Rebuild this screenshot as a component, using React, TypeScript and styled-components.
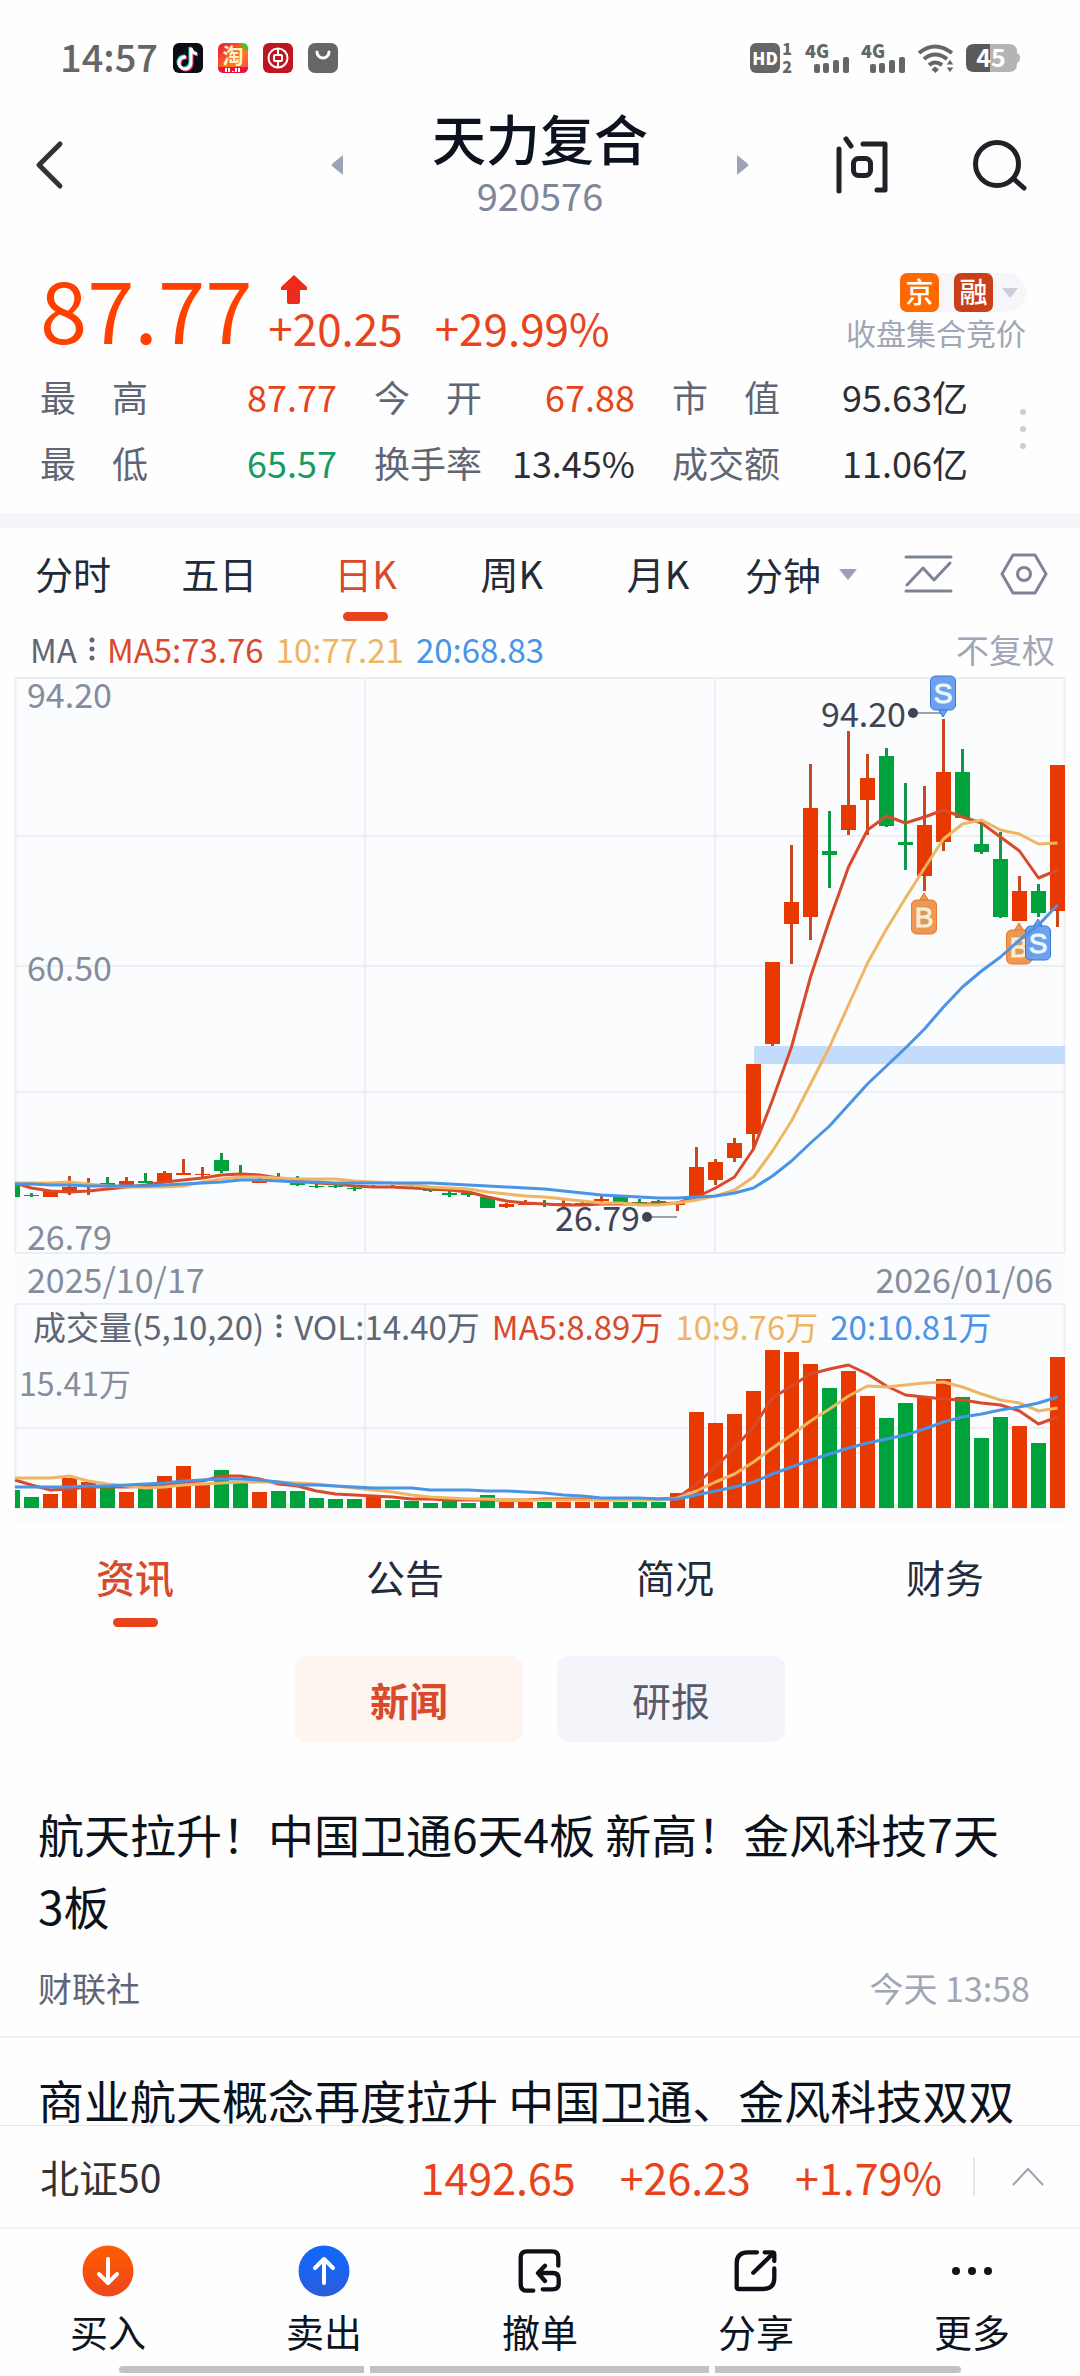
import React, { useState } from "react";
import styled, { createGlobalStyle } from "styled-components";

const RED = "#e8431a";
const INK = "#222b3a";
const SLATE = "#5f6675";
const MUTED = "#a0a6b6";
const MA_RED = "#d84a2b";
const MA_GOLD = "#eeb663";
const MA_BLUE = "#4a94e6";
const UP = "#e83a00";
const DOWN = "#00a33b";

const GlobalStyle = createGlobalStyle`
  * { box-sizing: border-box; }
  body {
    margin: 0;
    background: #fefefe;
    font-family: "Noto Sans CJK SC", "Noto Sans", sans-serif;
    color: ${INK};
  }
  button { font: inherit; color: inherit; background: none; border: 0; padding: 0; cursor: pointer; }
  h1, h2, p, dl, dd, dt { margin: 0; font-weight: 400; }
  svg { display: block; overflow: visible; }
`;

const Screen = styled.div`
  height: 100vh;
  display: flex;
  flex-direction: column;
  overflow: hidden;
`;

/* ---------- status bar ---------- */

const StatusBar = styled.div`
  display: flex;
  align-items: center;
  justify-content: space-between;
  height: 96px;
  padding: 20px 60px 0 60px;
  flex: none;
`;
const StatusGroup = styled.div<{ $gap: number }>`
  display: flex;
  align-items: center;
  gap: ${(p) => p.$gap}px;
`;
const Clock = styled.span`
  font-size: 38px;
  line-height: 40px;
  font-weight: 500;
  color: #666;
  padding-bottom: 5px;
`;

const HdIcon = () => (
  <svg width="43" height="30" viewBox="0 0 43 30" fontFamily="Noto Sans CJK SC, sans-serif" fontWeight="900" fill="#666">
    <rect width="30" height="30" rx="6" />
    <text x="15" y="22" fontSize="17" textAnchor="middle" fill="#fff">HD</text>
    <text x="37" y="12" fontSize="16" textAnchor="middle">1</text>
    <text x="37" y="30" fontSize="16" textAnchor="middle">2</text>
  </svg>
);
const SignalIcon = () => (
  <svg width="44" height="30" viewBox="0 0 44 30" fill="#666">
    <text x="0" y="15" fontSize="18" fontWeight="900" fontFamily="Noto Sans CJK SC, sans-serif">4G</text>
    <rect x="9" y="21" width="6" height="9" rx="2" />
    <rect x="18" y="20" width="6" height="10" rx="2" />
    <rect x="28" y="17" width="6" height="13" rx="2" />
    <rect x="38" y="14" width="6" height="16" rx="2" />
  </svg>
);
const WifiIcon = () => (
  <svg width="37" height="30" viewBox="0 0 37 30" fill="none" stroke="#666" strokeWidth="4">
    <path d="M2 10 Q18 -3 35 10" />
    <path d="M7 16 Q18 7 30 16" />
    <path d="M12 22 Q18 17 25 22" />
    <path d="M18 23.500 L22 26.500 L18.500 30 L14.500 26.500Z" fill="#666" stroke="none" />
    <path d="M33 16 l4 6 h-8z M33 30 l4-6 h-8z" fill="#666" stroke="#fff" strokeWidth="1" />
  </svg>
);
const BatteryIcon = () => (
  <svg width="54" height="28" viewBox="0 0 54 28">
    <path d="M8 0 H24 V28 H8 Q0 28 0 20 V8 Q0 0 8 0Z" fill="#5a5a5a" />
    <path d="M24 0 H43 Q51 0 51 8 V9 Q54 10 54 14 Q54 18 51 19 V20 Q51 28 43 28 H24Z" fill="#b4b4b4" />
    <text x="25" y="23" fontSize="25" fontWeight="700" textAnchor="middle" fill="#fff" fontFamily="Noto Sans CJK SC, sans-serif">45</text>
  </svg>
);
const VideoAppIcon = () => (
  <svg width="30" height="30" viewBox="0 0 30 30" fill="none" strokeWidth="3">
    <rect width="30" height="30" rx="6" fill="#0c0d14" />
    <path d="M13 14 a6 6 0 1 0 5 6 V5 q1 5 6 6" stroke="#25e5e0" transform="translate(-1 -1)" />
    <path d="M13 14 a6 6 0 1 0 5 6 V5 q1 5 6 6" stroke="#f1385c" transform="translate(1 1)" />
    <path d="M13 14 a6 6 0 1 0 5 6 V5 q1 5 6 6" stroke="#fff" />
  </svg>
);
const ShopAppIcon = () => (
  <svg width="30" height="30" viewBox="0 0 30 30">
    <defs>
      <linearGradient id="shop" x1="0" y1="0" x2="1" y2="1">
        <stop offset="0" stopColor="#e3183b" />
        <stop offset="0.6" stopColor="#ff7a1c" />
        <stop offset="1" stopColor="#ff3b6b" />
      </linearGradient>
    </defs>
    <rect width="30" height="30" rx="6" fill="url(#shop)" />
    <path d="M22 0 H25 Q30 0 30 6 V8 Q25 6 22 0Z" fill="#4fc32c" />
    <path d="M0 24 H30 Q30 30 24 30 H6 Q0 30 0 24Z" fill="#e8113f" />
    <text x="15" y="20" fontSize="21" fontWeight="700" textAnchor="middle" fill="#fff3c8" fontFamily="Noto Sans CJK SC, sans-serif">淘</text>
    <path d="M8 25 v4 M11 25 v4 M15 28 v1 M18 25 v4 M21 25 v4" stroke="#fff" strokeWidth="2" />
  </svg>
);
const BankAppIcon = () => (
  <svg width="30" height="30" viewBox="0 0 30 30" fill="none" stroke="#fff">
    <rect width="30" height="30" rx="6" fill="#bf1521" stroke="none" />
    <circle cx="15" cy="15" r="9.500" strokeWidth="2" />
    <rect x="11" y="12" width="8" height="6" rx="1" strokeWidth="2" />
    <path d="M15 5 V12 M15 18 V25" strokeWidth="2" />
  </svg>
);
const BagAppIcon = () => (
  <svg width="30" height="30" viewBox="0 0 30 30">
    <rect width="30" height="30" rx="7" fill="#666" />
    <path d="M9 9 a6 6 0 0 0 12 0" fill="none" stroke="#fff" strokeWidth="3" strokeLinecap="round" />
  </svg>
);

/* ---------- header ---------- */

const Header = styled.header`
  display: grid;
  grid-template-columns: 1fr 418px 1fr;
  align-items: center;
  height: 138px;
  flex: none;
  padding: 0 34px;
`;
const BackButton = styled.button`
  justify-self: start;
`;
const Switcher = styled.div`
  display: flex;
  align-items: center;
  justify-content: space-between;
`;
const Security = styled.div`
  text-align: center;
  padding-bottom: 4px;
`;
const SecurityName = styled.h1`
  font-size: 54px;
  line-height: 64px;
  font-weight: 500;
  color: #0c131f;
`;
const SecurityCode = styled.p`
  font-size: 38px;
  line-height: 50px;
  color: #7e869a;
`;
const HeaderActions = styled.div`
  display: flex;
  justify-content: flex-end;
  align-items: center;
  gap: 82px;
  padding-right: 18px;
`;

/* ---------- quote ---------- */

const Quote = styled.section`
  flex: none;
  padding: 0 54px 18px 40px;
`;
const PriceRow = styled.div`
  display: flex;
  height: 129px;
`;
const Price = styled.p`
  font-size: 85px;
  line-height: 146px;
  color: #ff4000;
`;
const Change = styled.div`
  display: flex;
  flex-direction: column;
  padding: 40px 0 0 16px;
`;
const RiseArrow = styled.svg`
  margin: 1px 0 0 12px;
`;
const ChangeValues = styled.div`
  display: flex;
  gap: 32px;
  font-size: 44px;
  line-height: 50px;
  margin-top: -3px;
  color: ${RED};
`;
const Session = styled.div`
  margin-left: auto;
  padding-top: 39px;
  text-align: right;
`;
const Tags = styled.button`
  display: inline-flex;
  align-items: center;
  gap: 9px;
  height: 39px;
  padding-right: 8px;
  background: #f6f6fa;
  border-radius: 8px 20px 20px 8px;
  vertical-align: top;
`;
const TagPair = styled.span`
  display: flex;
  gap: 15px;
`;
const Tag = styled.span<{ $color: string }>`
  width: 39px;
  height: 39px;
  border-radius: 7px;
  background: ${(p) => p.$color};
  color: #fff;
  font-size: 28px;
  line-height: 37px;
  font-weight: 500;
  text-align: center;
`;
const SessionNote = styled.p`
  font-size: 30px;
  line-height: 40px;
  color: ${MUTED};
`;
const StatsWrap = styled.div`
  display: flex;
  justify-content: space-between;
  align-items: center;
`;
const Stats = styled.dl`
  display: grid;
  grid-template-columns: 297fr 261fr 296fr;
  column-gap: 37px;
  flex: 1;
  margin-right: 52px;
`;
const Stat = styled.div`
  display: flex;
  justify-content: space-between;
  font-size: 36px;
  line-height: 66px;
  white-space: nowrap;
`;
const StatName = styled.dt`
  color: ${SLATE};
`;
const StatValue = styled.dd<{ $color: string }>`
  color: ${(p) => p.$color};
`;
const Band = styled.div`
  flex: none;
  height: 15px;
  background: #f4f5fa;
`;

/* ---------- chart ---------- */

const Periods = styled.nav`
  flex: none;
  display: grid;
  grid-template-columns: 731fr 317fr;
  height: 98px;
  padding-right: 32px;
  align-items: start;
`;
const Underlined = styled.button<{ $active: boolean; $top: number; $lh: number; $weight: number }>`
  flex: 1;
  display: flex;
  flex-direction: column;
  align-items: center;
  padding-top: ${(p) => p.$top}px;
  line-height: ${(p) => p.$lh}px;
  font-weight: ${(p) => p.$weight};
  white-space: nowrap;
  color: ${(p) => (p.$active ? MA_RED : INK)};
  &::after {
    content: "";
    width: 45px;
    height: 9px;
    border-radius: 5px;
    background: ${(p) => (p.$active ? RED : "transparent")};
  }
`;
const PeriodTabs = styled.div`
  display: flex;
  font-size: 38px;
`;
const PeriodTools = styled.div`
  display: flex;
  justify-content: space-between;
  padding-left: 14px;
  font-size: 38px;
`;
const ToolButton = styled.button`
  display: flex;
  align-items: center;
  gap: 18px;
  height: 92px;
  line-height: 84px;
  white-space: nowrap;
`;
const Legend = styled.div<{ $pad: string }>`
  flex: none;
  display: flex;
  align-items: center;
  gap: 12px;
  height: 51px;
  padding: ${(p) => p.$pad};
  font-size: 33px;
  line-height: 44px;
  white-space: nowrap;
`;
const LegendItem = styled.span<{ $color: string }>`
  color: ${(p) => p.$color};
`;
const Adjust = styled.button`
  margin-left: auto;
  color: ${MUTED};
`;
const ChartPanel = styled.section`
  flex: none;
  margin: 0 15px;
  background: #fbfcfe;
`;
const Stack = styled.div`
  display: grid;
  & > * { grid-area: 1 / 1; }
`;
const ChartSvg = styled.svg`
  width: 100%;
  height: auto;
  font-family: "Noto Sans CJK SC", sans-serif;
`;
const DateRow = styled.div`
  display: flex;
  justify-content: space-between;
  padding: 1px 12px 0;
  font-size: 34px;
  line-height: 48px;
  color: #858c9c;
  border-bottom: 2px solid #eceef2;
`;

type Candle = [up: 0 | 1, high: number, top: number, bottom: number, low: number];

/* Newest session first. */
const candles: Candle[] = [
  [1, 765, 765, 911, 927], [0, 884, 891, 913, 917], [1, 876, 891, 921, 921], [0, 832, 859, 917, 918],
  [0, 823, 844, 852, 854], [0, 749, 772, 818, 818], [1, 719, 772, 842, 851], [1, 786, 825, 876, 891],
  [0, 783, 842, 845, 870], [0, 748, 756, 826, 827], [1, 754, 778, 800, 835], [1, 731, 805, 830, 835],
  [0, 811, 851, 855, 888], [1, 764, 808, 917, 940], [1, 845, 902, 924, 964], [1, 962, 962, 1044, 1046],
  [1, 1064, 1064, 1134, 1150], [1, 1138, 1143, 1158, 1162], [1, 1159, 1162, 1180, 1185], [1, 1147, 1167, 1196, 1196],
  [1, 1203, 1203, 1205, 1211], [0, 1200, 1201, 1203, 1203], [0, 1199, 1202, 1204, 1204], [0, 1197, 1197, 1202, 1202],
  [1, 1196, 1199, 1201, 1202], [1, 1202, 1203, 1205, 1205], [1, 1200, 1203, 1205, 1207], [0, 1200, 1203, 1205, 1207],
  [1, 1200, 1204, 1205, 1205], [1, 1203, 1204, 1207, 1208], [0, 1197, 1197, 1208, 1208], [0, 1192, 1193, 1195, 1197],
  [0, 1191, 1193, 1195, 1197], [0, 1187, 1187, 1191, 1192], [0, 1186, 1187, 1188, 1188], [0, 1185, 1186, 1187, 1187],
  [1, 1185, 1186, 1187, 1187], [0, 1186, 1188, 1189, 1191], [0, 1185, 1186, 1187, 1188], [0, 1184, 1186, 1187, 1188],
  [0, 1176, 1182, 1185, 1186], [0, 1173, 1177, 1179, 1179], [1, 1174, 1181, 1183, 1183], [0, 1165, 1177, 1178, 1178],
  [0, 1153, 1160, 1171, 1173], [1, 1167, 1174, 1175, 1177], [1, 1159, 1173, 1175, 1175], [1, 1171, 1173, 1183, 1183],
  [0, 1173, 1181, 1183, 1183], [1, 1177, 1181, 1185, 1185], [0, 1177, 1183, 1185, 1185], [1, 1178, 1184, 1186, 1195],
  [1, 1176, 1187, 1193, 1195], [1, 1191, 1191, 1197, 1197], [0, 1193, 1195, 1196, 1197], [0, 1185, 1185, 1197, 1197],
];

const priceMa5 = [
  870, 878, 851, 837, 823, 817, 810, 817, 823, 816, 830, 867, 920, 977, 1047, 1100, 1149, 1177, 1188, 1197, 1203, 1204, 1204, 1204, 1204, 1205, 1205, 1204,
  1203, 1201, 1197, 1192, 1190, 1189, 1188, 1187, 1187, 1186, 1184, 1183, 1181, 1178, 1175, 1174, 1175, 1178, 1180, 1182, 1185, 1187, 1189, 1191, 1192, 1191, 1188, 1183,
];
const priceMa10 = [
  843, 844, 834, 830, 820, 824, 839, 868, 898, 929, 963, 1005, 1047, 1084, 1121, 1151, 1177, 1190, 1196, 1200, 1203, 1205, 1205, 1203, 1203, 1201, 1199, 1197,
  1196, 1194, 1192, 1189, 1188, 1187, 1185, 1183, 1182, 1181, 1179, 1179, 1179, 1178, 1177, 1177, 1179, 1182, 1186, 1187, 1187, 1187, 1186, 1184, 1182, 1183, 1183, 1183,
];
const priceMa20 = [
  905, 925, 940, 957, 971, 987, 1007, 1029, 1048, 1066, 1084, 1105, 1126, 1143, 1161, 1176, 1188, 1193, 1196, 1197, 1198, 1198, 1197, 1196, 1195, 1193, 1191, 1189,
  1188, 1187, 1186, 1185, 1184, 1183, 1183, 1183, 1183, 1183, 1183, 1182, 1182, 1181, 1180, 1180, 1182, 1183, 1184, 1185, 1186, 1186, 1186, 1186, 1185, 1185, 1184, 1184,
];
const volumeTops = [
  1357, 1443, 1426, 1417, 1438, 1397, 1379, 1397, 1403, 1418, 1396, 1371, 1388, 1364, 1352, 1350, 1391, 1414, 1423, 1412, 1493, 1502, 1502, 1502, 1502, 1502, 1502, 1502,
  1502, 1502, 1495, 1503, 1501, 1503, 1501, 1500, 1497, 1499, 1499, 1498, 1491, 1491, 1492, 1483, 1470, 1485, 1466, 1476, 1488, 1492, 1488, 1482, 1478, 1494, 1497, 1490,
];
const volumeMa5 = [
  1417, 1424, 1411, 1405, 1403, 1400, 1399, 1397, 1395, 1386, 1374, 1365, 1369, 1374, 1386, 1398, 1427, 1448, 1467, 1484, 1498, 1499, 1499, 1499, 1499, 1499, 1499, 1499,
  1500, 1500, 1500, 1500, 1500, 1499, 1499, 1497, 1496, 1495, 1494, 1491, 1486, 1484, 1479, 1476, 1476, 1481, 1482, 1486, 1486, 1487, 1487, 1487, 1489, 1490, 1485, 1480,
];
const volumeMa10 = [
  1408, 1411, 1403, 1400, 1394, 1387, 1382, 1383, 1385, 1387, 1386, 1396, 1409, 1421, 1435, 1448, 1462, 1474, 1482, 1491, 1498, 1500, 1500, 1500, 1500, 1500, 1500, 1500,
  1500, 1500, 1499, 1499, 1498, 1497, 1495, 1492, 1490, 1488, 1486, 1484, 1483, 1482, 1482, 1482, 1483, 1484, 1485, 1487, 1488, 1486, 1484, 1481, 1476, 1478, 1478, 1478,
];
const volumeMa20 = [
  1397, 1403, 1407, 1410, 1414, 1417, 1422, 1429, 1435, 1439, 1443, 1448, 1454, 1460, 1467, 1474, 1482, 1487, 1491, 1495, 1499, 1499, 1498, 1498, 1498, 1496, 1495, 1493,
  1492, 1491, 1491, 1490, 1490, 1490, 1488, 1488, 1488, 1487, 1486, 1485, 1485, 1482, 1480, 1479, 1479, 1480, 1481, 1483, 1484, 1485, 1486, 1486, 1487, 1487, 1487, 1487,
];

const STEP = 19;
const LAST_X = 1057.5;
const CHART_LEFT = 15;
const sessionX = (i: number) => LAST_X - i * STEP;
const toPoints = (ys: number[]) => ys.map((y, i) => `${Math.max(sessionX(i), CHART_LEFT)},${y}`).join(" ");
const barBox = (i: number) => {
  const x = Math.max(sessionX(i) - 7.5, CHART_LEFT);
  return { x, width: sessionX(i) + 7.5 - x };
};

const MaLines = ({ series }: { series: number[][] }) => (
  <g fill="none" strokeWidth="3" strokeLinejoin="round">
    {series.map((ys, i) => (
      <polyline key={i} points={toPoints(ys)} stroke={[MA_RED, MA_GOLD, MA_BLUE][i]} />
    ))}
  </g>
);

const TradeMark = ({ x, y, kind, below }: { x: number; y: number; kind: "B" | "S"; below?: boolean }) => {
  const buy = kind === "B";
  return (
    <g fill={buy ? "#f0924a" : "#669df0"} stroke={buy ? "#e6712a" : "#2f6fd8"} strokeWidth="1" opacity="0.95">
      <path d={below ? `M${x} ${y - 24} l-5 8 h10z` : `M${x} ${y + 24} l-5 -8 h10z`} />
      <rect x={x - 12.5} y={y - 17} width="25" height="34" rx="5" />
      {buy && <rect x={x - 7} y={y - 11} width="14" height="22" fill="#cf9a58" stroke="none" />}
      <text x={x} y={y + 10} fontSize="28" textAnchor="middle" fill={buy ? "#ffeccb" : "#e9fbff"} stroke={buy ? "#ffeccb" : "#e9fbff"} fontFamily="Liberation Sans, sans-serif">
        {kind}
      </text>
    </g>
  );
};

const PriceChart = () => (
  <ChartSvg viewBox="15 677 1050 577" role="img" aria-label="日K">
    <g stroke="#eceef2" strokeWidth="2" fill="none">
      <path d="M15 678 H1065 M15 836 H1065 M15 966 H1065 M15 1092 H1065 M15 1253 H1065" />
      <path d="M15.500 677 V1254 M365 677 V1254 M715 677 V1254 M1064.500 677 V1254" />
    </g>
    <rect x="754" y="1046" width="311" height="18" fill="#c4dcfb" />
    {candles.map(([up, high, top, bottom, low], i) => (
      <g key={i} fill={up ? UP : DOWN}>
        {sessionX(i) > CHART_LEFT && <rect x={sessionX(i) - 1.5} y={high} width="3" height={low - high} fill={up ? "#cb481f" : "#13964a"} />}
        <rect {...barBox(i)} y={top} height={bottom - top} />
      </g>
    ))}
    <g fill="#858c9c" fontSize="34">
      <text x="27" y="708">94.20</text>
      <text x="27" y="981">60.50</text>
      <text x="27" y="1250">26.79</text>
    </g>
    <g fill="#3f4555" fontSize="34">
      <path d="M913 713 H943 M647 1217 H677" stroke="#9aa0ac" strokeWidth="2" />
      <circle cx="913" cy="713" r="5" />
      <circle cx="647" cy="1217" r="5" />
      <text x="906" y="727" textAnchor="end">94.20</text>
      <text x="640" y="1231" textAnchor="end">26.79</text>
    </g>
    <TradeMark x={943} y={693} kind="S" />
    <TradeMark x={924} y={917} kind="B" below />
    <TradeMark x={1019} y={947} kind="B" below />
    <TradeMark x={1038} y={943} kind="S" below />
    <MaLines series={[priceMa5, priceMa10, priceMa20]} />
  </ChartSvg>
);

const VolumeChart = () => (
  <ChartSvg viewBox="15 1305 1050 220" role="img" aria-label="成交量">
    <g stroke="#eceef2" strokeWidth="2" fill="none">
      <path d="M15 1428 H1065 M15 1508 H1065 M15.500 1305 V1508 M365 1305 V1508 M715 1305 V1508 M1064.500 1305 V1508" />
    </g>
    {volumeTops.map((top, i) => (
      <rect key={i} {...barBox(i)} y={top} height={1508 - top} fill={candles[i][0] ? UP : DOWN} />
    ))}
    <text x="19" y="1396" fontSize="32" fill="#858c9c">15.41万</text>
    <MaLines series={[volumeMa5, volumeMa10, volumeMa20]} />
  </ChartSvg>
);

const MenuDots = () => (
  <svg width="6" height="28" viewBox="0 0 6 28" fill={SLATE}>
    <circle cx="3" cy="5" r="2.500" />
    <circle cx="3" cy="14" r="2.500" />
    <circle cx="3" cy="23" r="2.500" />
  </svg>
);

/* ---------- news ---------- */

const InfoTabs = styled.nav`
  flex: none;
  display: flex;
  font-size: 39px;
  height: 131px;
  align-items: flex-start;
`;
const Chips = styled.div`
  flex: none;
  display: flex;
  justify-content: center;
  gap: 34px;
`;
const Chip = styled.button<{ $active: boolean }>`
  width: 228px;
  height: 86px;
  border-radius: 12px;
  font-size: 39px;
  line-height: 82px;
  font-weight: ${(p) => (p.$active ? 700 : 400)};
  color: ${(p) => (p.$active ? MA_RED : "#555c6b")};
  background: ${(p) => (p.$active ? "#fff5f0" : "#f4f5fa")};
`;
const NewsList = styled.main`
  flex: 1;
  min-height: 0;
  overflow: hidden;
`;
const Article = styled.article`
  padding: 25px 50px 20px 38px;
  border-bottom: 2px solid #eff0f3;
  &:first-child { padding-top: 55px; }
`;
const Headline = styled.h2`
  font-size: 46px;
  line-height: 72px;
  color: #0b121c;
  padding-right: 12px;
`;
const Meta = styled.div`
  display: flex;
  justify-content: space-between;
  font-size: 34px;
  line-height: 56px;
  padding-top: 19px;
  color: ${SLATE};
`;
const Time = styled.time`
  color: ${MUTED};
`;

/* ---------- footer ---------- */

const Footer = styled.footer`
  flex: none;
  background: #fefefe;
`;
const IndexBar = styled.div`
  display: flex;
  align-items: center;
  height: 102px;
  padding: 0 36px 0 40px;
  border-top: 1px solid #e2e5ea;
`;
const IndexName = styled.span`
  flex: 1;
  font-size: 39px;
  line-height: 60px;
  padding-bottom: 2px;
  color: #333;
`;
const IndexValues = styled.div`
  display: flex;
  gap: 44px;
  font-size: 43px;
  line-height: 60px;
  padding-bottom: 2px;
  color: ${RED};
`;
const Rule = styled.span`
  width: 2px;
  height: 39px;
  margin: 0 37px 0 31px;
  background: #e4e7ec;
`;
const Actions = styled.nav`
  display: flex;
  height: 139px;
  border-top: 2px solid #eef0f2;
`;
const Action = styled.button`
  flex: 1;
  display: flex;
  flex-direction: column;
  align-items: center;
  padding-top: 16px;
  font-size: 38px;
  line-height: 52px;
  gap: 8px;
  color: #0d141e;
`;
const HomeBar = styled.div`
  display: flex;
  gap: 6px;
  height: 10px;
  padding: 0 119px;
`;
const HomePart = styled.span<{ $grow: number }>`
  flex: ${(p) => p.$grow};
  height: 7px;
  background: #c2c2c2;
  &:first-child { border-radius: 4px 0 0 4px; }
  &:last-child { border-radius: 0 4px 4px 0; }
`;

const BuyIcon = () => (
  <svg width="52" height="52" viewBox="0 0 52 52">
    <defs>
      <linearGradient id="buy" x1="0" y1="0" x2="0" y2="1">
        <stop offset="0" stopColor="#ff5d00" />
        <stop offset="1" stopColor="#ee461c" />
      </linearGradient>
    </defs>
    <circle cx="26" cy="26" r="25.500" fill="url(#buy)" />
    <path d="M26 14 V37 M17 29 L26 38 L35 29" fill="none" stroke="#fff" strokeWidth="4" strokeLinecap="round" strokeLinejoin="round" />
  </svg>
);
const SellIcon = () => (
  <svg width="52" height="52" viewBox="0 0 52 52">
    <defs>
      <linearGradient id="sell" x1="0" y1="0" x2="0" y2="1">
        <stop offset="0" stopColor="#1168ff" />
        <stop offset="1" stopColor="#2c5ddb" />
      </linearGradient>
    </defs>
    <circle cx="26" cy="26" r="25.500" fill="url(#sell)" />
    <path d="M26 38 V15 M17 23 L26 14 L35 23" fill="none" stroke="#fff" strokeWidth="4" strokeLinecap="round" strokeLinejoin="round" />
  </svg>
);
const lineIcon = { width: 52, height: 52, viewBox: "-2 -2 52 52", fill: "none", stroke: "#0d1117", strokeWidth: 4.3, strokeLinecap: "round", strokeLinejoin: "round" } as const;
const CancelIcon = () => (
  <svg {...lineIcon}>
    <path d="M17.300 43.700 H11 Q4.700 43.700 4.700 37.500 V10.500 Q4.700 4.300 11 4.300 H36 Q42.300 4.300 42.300 10.500 V18.700" />
    <path d="M26.700 42.300 H37 Q42.700 42.300 42.700 36.500 V32 Q42.700 26 37 26 H22.500 M29 18.700 L22 26 L29 34" />
  </svg>
);
const ShareIcon = () => (
  <svg {...lineIcon}>
    <path d="M25 5.300 H16 Q4.700 5.300 4.700 16 V40 Q4.700 42 6.700 42 H31 Q42.300 42 42.300 31 V21.500" />
    <path d="M21.300 25.700 L41 6.500 M32.700 5.300 H40.500 Q42.300 5.300 42.300 7 V14" />
  </svg>
);
const MoreIcon = () => (
  <svg width="52" height="52" viewBox="0 0 52 52" fill="#0d141e">
    <circle cx="10" cy="26" r="4" />
    <circle cx="26" cy="26" r="4" />
    <circle cx="42" cy="26" r="4" />
  </svg>
);

const stats = [
  ["最　高", "87.77", RED],
  ["今　开", "67.88", RED],
  ["市　值", "95.63亿", "#2c2e33"],
  ["最　低", "65.57", "#169c63"],
  ["换手率", "13.45%", "#2c2e33"],
  ["成交额", "11.06亿", "#2c2e33"],
];
const actions = [
  { label: "买入", Icon: BuyIcon },
  { label: "卖出", Icon: SellIcon },
  { label: "撤单", Icon: CancelIcon },
  { label: "分享", Icon: ShareIcon },
  { label: "更多", Icon: MoreIcon },
];

export default function App() {
  const [period, setPeriod] = useState("日K");
  const [section, setSection] = useState("资讯");
  const [feed, setFeed] = useState("新闻");

  return (
    <Screen>
      <GlobalStyle />
      <StatusBar>
        <StatusGroup $gap={15}>
          <Clock>14:57</Clock>
          <VideoAppIcon />
          <ShopAppIcon />
          <BankAppIcon />
          <BagAppIcon />
        </StatusGroup>
        <StatusGroup $gap={12}>
          <HdIcon />
          <SignalIcon />
          <SignalIcon />
          <WifiIcon />
          <BatteryIcon />
        </StatusGroup>
      </StatusBar>

      <Header>
        <BackButton aria-label="返回">
          <svg width="32" height="50" viewBox="0 0 32 50" fill="none" stroke="#333" strokeWidth="5" strokeLinecap="round" strokeLinejoin="round">
            <path d="M26 4 L5 25 L26 46" />
          </svg>
        </BackButton>
        <Switcher>
          <button aria-label="上一只">
            <svg width="12" height="20" viewBox="0 0 12 20"><path d="M12 0 V20 L1 11 Q0 10 1 9Z" fill="#9ba3b6" /></svg>
          </button>
          <Security>
            <SecurityName>天力复合</SecurityName>
            <SecurityCode>920576</SecurityCode>
          </Security>
          <button aria-label="下一只">
            <svg width="12" height="20" viewBox="0 0 12 20"><path d="M0 0 V20 L11 11 Q12 10 11 9Z" fill="#9ba3b6" /></svg>
          </button>
        </Switcher>
        <HeaderActions>
          <button aria-label="问">
            <svg width="56" height="58" viewBox="0 0 56 58" fill="none" stroke="#1f2328" strokeWidth="5" strokeLinecap="round" strokeLinejoin="round">
              <path d="M5 13 V55 M12 3 L17 10 M29 8 H51 V54 H43" />
              <rect x="19.500" y="22.500" width="17" height="17" rx="5" />
            </svg>
          </button>
          <button aria-label="搜索">
            <svg width="56" height="52" viewBox="0 0 56 52" fill="none" stroke="#1f2328" strokeWidth="5" strokeLinecap="round">
              <circle cx="25" cy="25" r="21.500" />
              <path d="M43 41 L52 49" />
            </svg>
          </button>
        </HeaderActions>
      </Header>

      <Quote>
        <PriceRow>
          <Price>87.77</Price>
          <Change>
            <RiseArrow width="28" height="30" viewBox="0 0 28 30">
              <path d="M14 0 L27 12 V15 H20 V27 Q20 29 18 29 H9 Q7 29 7 27 V15 H1 V12Z" fill="#ee2a1c" />
            </RiseArrow>
            <ChangeValues>
              <span>+20.25</span>
              <span>+29.99%</span>
            </ChangeValues>
          </Change>
          <Session>
            <Tags aria-label="标签">
              <TagPair>
                <Tag $color="#ff6a00">京</Tag>
                <Tag $color="#cb3f18">融</Tag>
              </TagPair>
              <svg width="16" height="10" viewBox="0 0 16 10"><path d="M0 0 H16 L9 9 Q8 10 7 9Z" fill="#c9cedb" /></svg>
            </Tags>
            <SessionNote>收盘集合竞价</SessionNote>
          </Session>
        </PriceRow>
        <StatsWrap>
          <Stats>
            {stats.map(([name, value, color]) => (
              <Stat key={name}>
                <StatName>{name}</StatName>
                <StatValue $color={color}>{value}</StatValue>
              </Stat>
            ))}
          </Stats>
          <button aria-label="更多行情">
            <svg width="6" height="42" viewBox="0 0 6 42" fill="#c9ced9">
              <circle cx="3" cy="4" r="3" />
              <circle cx="3" cy="21" r="3" />
              <circle cx="3" cy="38" r="3" />
            </svg>
          </button>
        </StatsWrap>
      </Quote>
      <Band />

      <Periods>
        <PeriodTabs>
          {["分时", "五日", "日K", "周K", "月K"].map((p) => (
            <Underlined key={p} $active={p === period} $top={6} $lh={78} $weight={400} onClick={() => setPeriod(p)}>
              {p}
            </Underlined>
          ))}
        </PeriodTabs>
        <PeriodTools>
          <ToolButton>
            分钟
            <svg width="18" height="11" viewBox="0 0 18 11"><path d="M0 0 H18 L10 10 Q9 11 8 10Z" fill="#9aa1b4" /></svg>
          </ToolButton>
          <ToolButton aria-label="指标">
            <svg width="49" height="40" viewBox="0 0 49 40" fill="none" stroke="#7d8496" strokeWidth="3" strokeLinecap="round" strokeLinejoin="round">
              <path d="M2 3 H47 M2 37 H47 M3 31 L19 14 L30 26 L46 9" />
            </svg>
          </ToolButton>
          <ToolButton aria-label="设置">
            <svg width="48" height="42" viewBox="0 0 48 42" fill="none" stroke="#7d8496" strokeWidth="3" strokeLinejoin="round">
              <path d="M2 21 L13 2 H35 L46 21 L35 40 H13Z" />
              <circle cx="24" cy="21" r="6.500" />
            </svg>
          </ToolButton>
        </PeriodTools>
      </Periods>

      <Legend $pad="0 25px 5px 30px">
        <LegendItem $color={SLATE}>MA</LegendItem>
        <MenuDots />
        <LegendItem $color={MA_RED}>MA5:73.76</LegendItem>
        <LegendItem $color={MA_GOLD}>10:77.21</LegendItem>
        <LegendItem $color={MA_BLUE}>20:68.83</LegendItem>
        <Adjust>不复权</Adjust>
      </Legend>

      <ChartPanel>
        <PriceChart />
        <DateRow>
          <span>2025/10/17</span>
          <span>2026/01/06</span>
        </DateRow>
        <Stack>
          <VolumeChart />
          <Legend $pad="0 20px 10px 18px">
            <LegendItem $color={SLATE}>成交量(5,10,20)</LegendItem>
            <MenuDots />
            <LegendItem $color={SLATE}>VOL:14.40万</LegendItem>
            <LegendItem $color={MA_RED}>MA5:8.89万</LegendItem>
            <LegendItem $color={MA_GOLD}>10:9.76万</LegendItem>
            <LegendItem $color={MA_BLUE}>20:10.81万</LegendItem>
          </Legend>
        </Stack>
      </ChartPanel>

      <InfoTabs>
        {["资讯", "公告", "简况", "财务"].map((s) => (
          <Underlined key={s} $active={s === section} $top={9} $lh={84} $weight={s === section ? 500 : 400} onClick={() => setSection(s)}>
            {s}
          </Underlined>
        ))}
      </InfoTabs>
      <Chips>
        {["新闻", "研报"].map((f) => (
          <Chip key={f} $active={f === feed} onClick={() => setFeed(f)}>
            {f}
          </Chip>
        ))}
      </Chips>

      <NewsList>
        <Article>
          <Headline>航天拉升！中国卫通6天4板 新高！金风科技7天3板</Headline>
          <Meta>
            <span>财联社</span>
            <Time>今天 13:58</Time>
          </Meta>
        </Article>
        <Article>
          <Headline>商业航天概念再度拉升 中国卫通、金风科技双双</Headline>
        </Article>
      </NewsList>

      <Footer>
        <IndexBar>
          <IndexName>北证50</IndexName>
          <IndexValues>
            <span>1492.65</span>
            <span>+26.23</span>
            <span>+1.79%</span>
          </IndexValues>
          <Rule />
          <button aria-label="展开">
            <svg width="32" height="20" viewBox="0 0 32 20" fill="none" stroke="#9ba3b2" strokeWidth="2">
              <path d="M1 18 L16 2 L31 18" />
            </svg>
          </button>
        </IndexBar>
        <Actions>
          {actions.map(({ label, Icon }) => (
            <Action key={label}>
              <Icon />
              {label}
            </Action>
          ))}
        </Actions>
        <HomeBar>
          <HomePart $grow={245} />
          <HomePart $grow={338} />
          <HomePart $grow={246} />
        </HomeBar>
      </Footer>
    </Screen>
  );
}
